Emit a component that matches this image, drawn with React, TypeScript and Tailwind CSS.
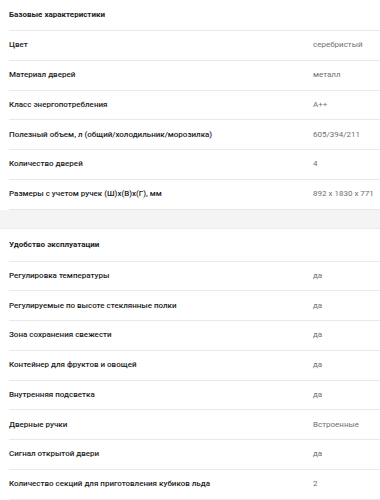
import React from "react";

type Row = [string, string];

const base: Row[] = [
  ["Цвет", "серебристый"],
  ["Материал дверей", "металл"],
  ["Класс энергопотребления", "A++"],
  ["Полезный объем, л (общий/холодильник/морозилка)", "605/394/211"],
  ["Количество дверей", "4"],
  ["Размеры с учетом ручек (Ш)x(В)x(Г), мм", "892 x 1830 x 771"],
];

const comfort: Row[] = [
  ["Регулировка температуры", "да"],
  ["Регулируемые по высоте стеклянные полки", "да"],
  ["Зона сохранения свежести", "да"],
  ["Контейнер для фруктов и овощей", "да"],
  ["Внутренняя подсветка", "да"],
  ["Дверные ручки", "Встроенные"],
  ["Сигнал открытой двери", "да"],
  ["Количество секций для приготовления кубиков льда", "2"],
];

function Rows({ rows }: { rows: Row[] }) {
  return (
    <>
      {rows.map(([k, v]) => (
        <div key={k} className="ml-[9px] flex h-[29.75px] items-center border-b border-[#e9e9e9]">
          <div className="flex-1 font-medium text-[#222]">{k}</div>
          <div className="w-[67px] text-[#6f6f6f]">{v}</div>
        </div>
      ))}
    </>
  );
}

export default function App() {
  return (
    <div
      className="w-[380px] h-[500px] overflow-hidden bg-white text-[8px] leading-none"
      style={{ fontFamily: 'Roboto, "Noto Sans", sans-serif' }}
    >
      <div className="ml-[9px] flex h-[31px] items-center border-b border-[#e9e9e9] font-bold text-[#222]">
        Базовые характеристики
      </div>
      <Rows rows={base} />
      <div className="h-[19px] bg-[#f4f4f4] border-b border-[#ececec]" />
      <div className="ml-[9px] flex h-[33px] items-center border-b border-[#e9e9e9] font-bold text-[#222]">
        Удобство эксплуатации
      </div>
      <Rows rows={comfort} />
    </div>
  );
}
